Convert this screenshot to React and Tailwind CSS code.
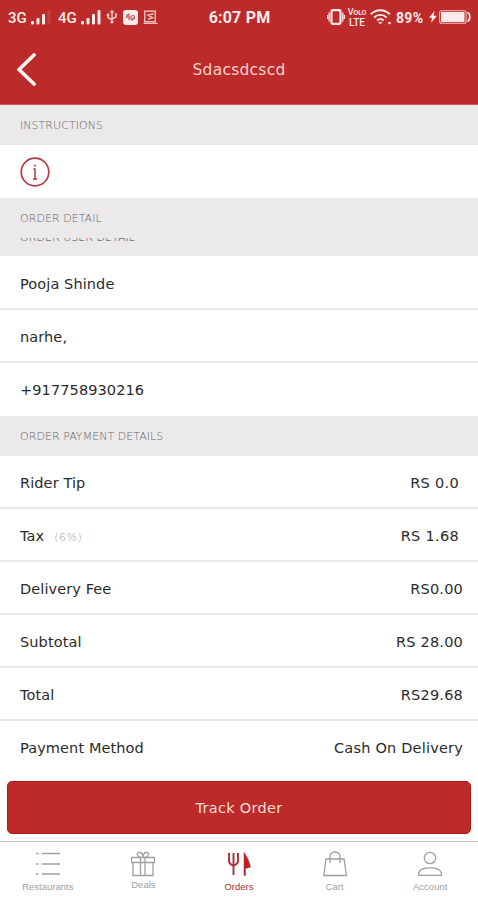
const charges = [
  { label: 'Rider Tip', value: 'RS 0.0', inset: true },
  { label: 'Tax', note: '(6%)', value: 'RS 1.68', inset: true },
  { label: 'Delivery Fee', value: 'RS0.00' },
  { label: 'Subtotal', value: 'RS 28.00' },
  { label: 'Total', value: 'RS29.68' },
  { label: 'Payment Method', value: 'Cash On Delivery' }
];

function SignalBars({ faded }) {
  return (
    <svg className="w-5 h-4 shrink-0" viewBox="0 0 20 16" fill="currentColor">
      <rect x="0" y="12" width="3" height="3.500" rx="1" />
      <rect x="5.500" y="9" width="3" height="6.500" rx="1" />
      <rect x="11" y="5" width="3" height="10.500" rx="1" />
      <rect x="16.500" y="1" width="3" height="14.500" rx="1" opacity={faded ? 0.12 : 1} />
    </svg>
  );
}

function StatusBar() {
  return (
    <div className="h-[34px] pl-2 pr-[7px] flex items-center justify-between text-[#fdeaea] font-[Roboto,sans-serif]">
      <div className="w-[200px] flex items-center">
        <span className="w-[23px] pt-[2px] text-[15px] leading-4 font-medium">3G</span>
        <SignalBars faded />
        <span className="w-[23px] ml-[7px] pt-[2px] text-[15px] leading-4 font-medium">4G</span>
        <SignalBars />
        {/* USB */}
        <svg className="w-3 h-4 ml-[5px] shrink-0" viewBox="0 0 12 16" fill="none" stroke="currentColor" strokeWidth="1.500" opacity="0.8">
          <path d="M6 2v11M2 6v2.500l4 2.500M10 5.500v2.500L6 10" />
          <path d="M4 3.500L6 1l2 2.500z" fill="currentColor" strokeWidth="0.500" />
          <circle cx="6" cy="13" r="1.300" fill="currentColor" strokeWidth="0.500" />
          <circle cx="2" cy="6" r="0.700" fill="currentColor" />
          <path d="M9.200 4.500h1.600v1.600H9.200z" fill="currentColor" strokeWidth="0.500" />
        </svg>
        <svg className="w-[15px] h-[15px] ml-[5px] shrink-0" viewBox="0 0 15 15" fill="none">
          <rect width="15" height="15" rx="3" fill="currentColor" />
          <path d="M3.500 8c0-2 1-4 2.500-4v6M3 7h4M8 10V7c0-2 3.500-2 3.500 0s-2 3-3 3.500M9 8.500h3" stroke="#c65a5a" strokeWidth="1.200" />
        </svg>
        <svg className="w-[15px] h-[15px] ml-[5px] shrink-0" viewBox="0 0 15 15" fill="none" stroke="currentColor" opacity="0.75">
          <rect x="1.700" y="1.200" width="10.500" height="10.500" strokeWidth="1.500" />
          <path d="M0.500 13.300h14" strokeWidth="1.400" />
          <path d="M9.500 4L5 5l4.500 2.800L5 9.300M9.500 3v2" strokeWidth="1.500" />
        </svg>
      </div>
      <span className="pt-px text-base leading-5 font-bold tracking-[0.2px] whitespace-nowrap">6:07 PM</span>
      <div className="w-[200px] flex items-center justify-end">
        {/* Vibrate */}
        <svg className="w-[18px] h-4 shrink-0" viewBox="0 0 18 16" fill="none" stroke="currentColor">
          <rect x="4.500" y="1.200" width="9" height="13.600" rx="1.500" strokeWidth="2.200" />
          <path d="M2.200 3.500v9M15.800 3.500v9M0.600 6v4M17.400 6v4" strokeWidth="1.300" />
        </svg>
        <div className="w-[18px] ml-[3px] flex flex-col items-center text-[10px] leading-[9px] font-medium">
          <span className="text-[9px] tracking-[-0.2px] whitespace-nowrap">Vo<span className="text-[7px]">LO</span></span>
          <span>LTE</span>
        </div>
        <svg className="w-[22px] h-4 ml-1 shrink-0" viewBox="0 0 22 16" fill="none" stroke="currentColor" strokeWidth="1.900">
          <path d="M0.800 5.200c5.500-5.300 13.500-5.300 19 0M4 8.500c3.700-3.500 9-3.500 12.600 0M7 11.500c2-1.900 4.700-1.900 6.600 0" />
          <path d="M8.500 13.200h3.600L10.300 15z" fill="currentColor" strokeWidth="0.600" />
          <circle cx="19.500" cy="14" r="1.100" fill="currentColor" strokeWidth="0.500" />
        </svg>
        <span className="w-[29px] ml-[4px] pt-px text-sm leading-4 font-bold tracking-[0.3px]">89%</span>
        <svg className="w-2 h-3 ml-1 shrink-0" viewBox="0 0 8 12" fill="currentColor">
          <path d="M5.500 0L0 6.800h3L2 12l6-7.300H4.600z" />
        </svg>
        <svg className="w-8 h-[14px] ml-[2px] shrink-0" viewBox="0 0 32 14" fill="none" stroke="currentColor">
          <rect x="0.600" y="0.800" width="26.500" height="12.400" rx="2" strokeWidth="1.100" opacity="0.8" />
          <rect x="2" y="2" width="23.500" height="10" rx="1" fill="currentColor" stroke="none" />
          <path d="M28.500 2.500c3 1.200 3 7.800 0 9" strokeWidth="1.700" />
        </svg>
      </div>
    </div>
  );
}

function Header() {
  return (
    <header className="h-[105px] bg-[#bc2a2a] border-b border-[#cf5a5e]">
      <StatusBar />
      <div className="h-[70px] px-[17px] flex items-center justify-between">
        <button className="w-5 h-[34px]">
          <svg className="w-5 h-[34px]" viewBox="0 0 20 34" fill="none" stroke="#fff4f2" strokeWidth="3.700" strokeLinecap="round" strokeLinejoin="round">
            <path d="M17 3L2 17.500l15 14.500" />
          </svg>
        </button>
        <h1 className="pt-[2px] text-[15.5px] leading-5 tracking-[0.25px] text-[#f6d3d0]">Sdacsdcscd</h1>
        <span className="w-5" />
      </div>
    </header>
  );
}

function SectionTitle({ children }) {
  return (
    <h2 className="h-10 px-[20px] pt-[2px] flex items-center bg-[#ebe9e9] text-[11px] tracking-[0.05px] font-extralight text-[#666] whitespace-nowrap">
      {children}
    </h2>
  );
}

function Row({ children, last }) {
  return (
    <div className={`h-[53px] pl-[20px] pr-[15px] flex items-center justify-between text-[14.5px] tracking-[0.1px] text-[#2b2b2b] ${last ? 'pt-[3px]' : 'pt-[4px] border-b-2 border-[#e9e9e9]'}`}>
      {children}
    </div>
  );
}

const icons = {
  Restaurants: (
    <path d="M0 2.500h2.500M6 2.500h18M0 13h2.500M6 13h18M0 23h2.500M6 23h18" />
  ),
  Deals: (
    <path d="M0.500 6.500h23v5h-23zM2 11.500v13h20v-13M9.500 6.500v18M14 6.500v18M12 6.500C5 6 5 1 9 1.500c2 .3 3 2.500 3 5zM12 6.500c7-.5 7-5.500 3-5-2 .3-3 2.500-3 5z" />
  ),
  Orders: (
    <>
      <path d="M2 2v8c0 2.500 1.500 3.500 4.500 4.500M11 2v8c0 2.500-1.500 3.500-4.500 4.500M6.500 2v22" strokeWidth="1.900" />
      <path d="M17 1.500c3 4 5.500 9 6.500 14.500l-5 1.500V24.500h-1.500z" fill="#bc2026" strokeWidth="0.500" />
    </>
  ),
  Cart: (
    <path d="M3 8h18l2.500 16.500H0.800zM7 12V5.500c0-6 10-6 10 0V12" />
  ),
  Account: (
    <>
      <circle cx="12" cy="7" r="5.700" />
      <path d="M0.700 24.300v-2.500c1-3.300 6-5 11.300-5s10.300 1.700 11.300 5v2.500z" />
    </>
  )
};

function TabBar() {
  return (
    <nav className="h-[59px] mt-[7px] border-t border-[#c9c9c9] grid grid-cols-5 font-['Liberation_Sans',sans-serif]">
      {Object.keys(icons).map((name) => (
        <button
          key={name}
          className={`pt-[9px] flex flex-col items-center ${name === 'Orders' ? 'text-[#ac2f36]' : 'text-[#a0a0a0]'}`}
        >
          <svg className="w-6 h-[26px]" viewBox="0 0 24 26" fill="none" stroke="currentColor" strokeWidth="1.300">
            {icons[name]}
          </svg>
          <span className={`text-[9.5px] leading-3 ${name === 'Deals' ? 'pt-[2px]' : 'pt-[4px]'}`}>{name}</span>
        </button>
      ))}
    </nav>
  );
}

export default function App() {
  return (
    <div className="w-[478px] h-[900px] overflow-hidden bg-white font-['DejaVu_Sans',sans-serif]">
      <Header />

      <SectionTitle>INSTRUCTIONS</SectionTitle>
      <div className="h-[53px] px-5 flex items-center">
        <svg className="w-[30px] h-[30px]" viewBox="0 0 30 30" fill="none" stroke="#b43a42">
          <circle cx="15" cy="15" r="13.800" strokeWidth="1.700" />
          <path d="M13.300 12h1.700v9.500M13 22h4" strokeWidth="1.500" />
          <circle cx="15" cy="8.500" r="1" fill="#b43a42" stroke="none" />
        </svg>
      </div>

      <SectionTitle>ORDER DETAIL</SectionTitle>
      {/* Scrolled under the sticky section title */}
      <div className="h-[18px] overflow-hidden bg-[#ebe9e9]">
        <p className="-mt-[6px] px-[20px] text-[11px] leading-3 tracking-[0.05px] font-extralight text-[#444]">ORDER USER DETAIL</p>
      </div>
      <div className="pt-px">
        <Row>Pooja Shinde</Row>
        <Row>narhe,</Row>
        <Row last>+917758930216</Row>
      </div>

      <SectionTitle>ORDER PAYMENT DETAILS</SectionTitle>
      {charges.map((item, i) => (
        <Row key={item.label} last={i === charges.length - 1}>
          <span>
            {item.label}
            {item.note && <span className="ml-[10px] text-[11px] tracking-[0.5px] font-extralight text-[#999]">{item.note}</span>}
          </span>
          <span className={item.inset ? 'pr-1 tracking-[0.3px]' : 'tracking-[0.2px]'}>{item.value}</span>
        </Row>
      ))}

      <div className="px-[7px] pt-[7px]">
        <button className="w-full h-[53px] pt-[2px] rounded-[5px] bg-[#bc2a2a] border border-[#b01c1e] text-[14.5px] tracking-[0.3px] text-[#f9dedc]">
          Track Order
        </button>
      </div>

      <TabBar />
    </div>
  );
}
